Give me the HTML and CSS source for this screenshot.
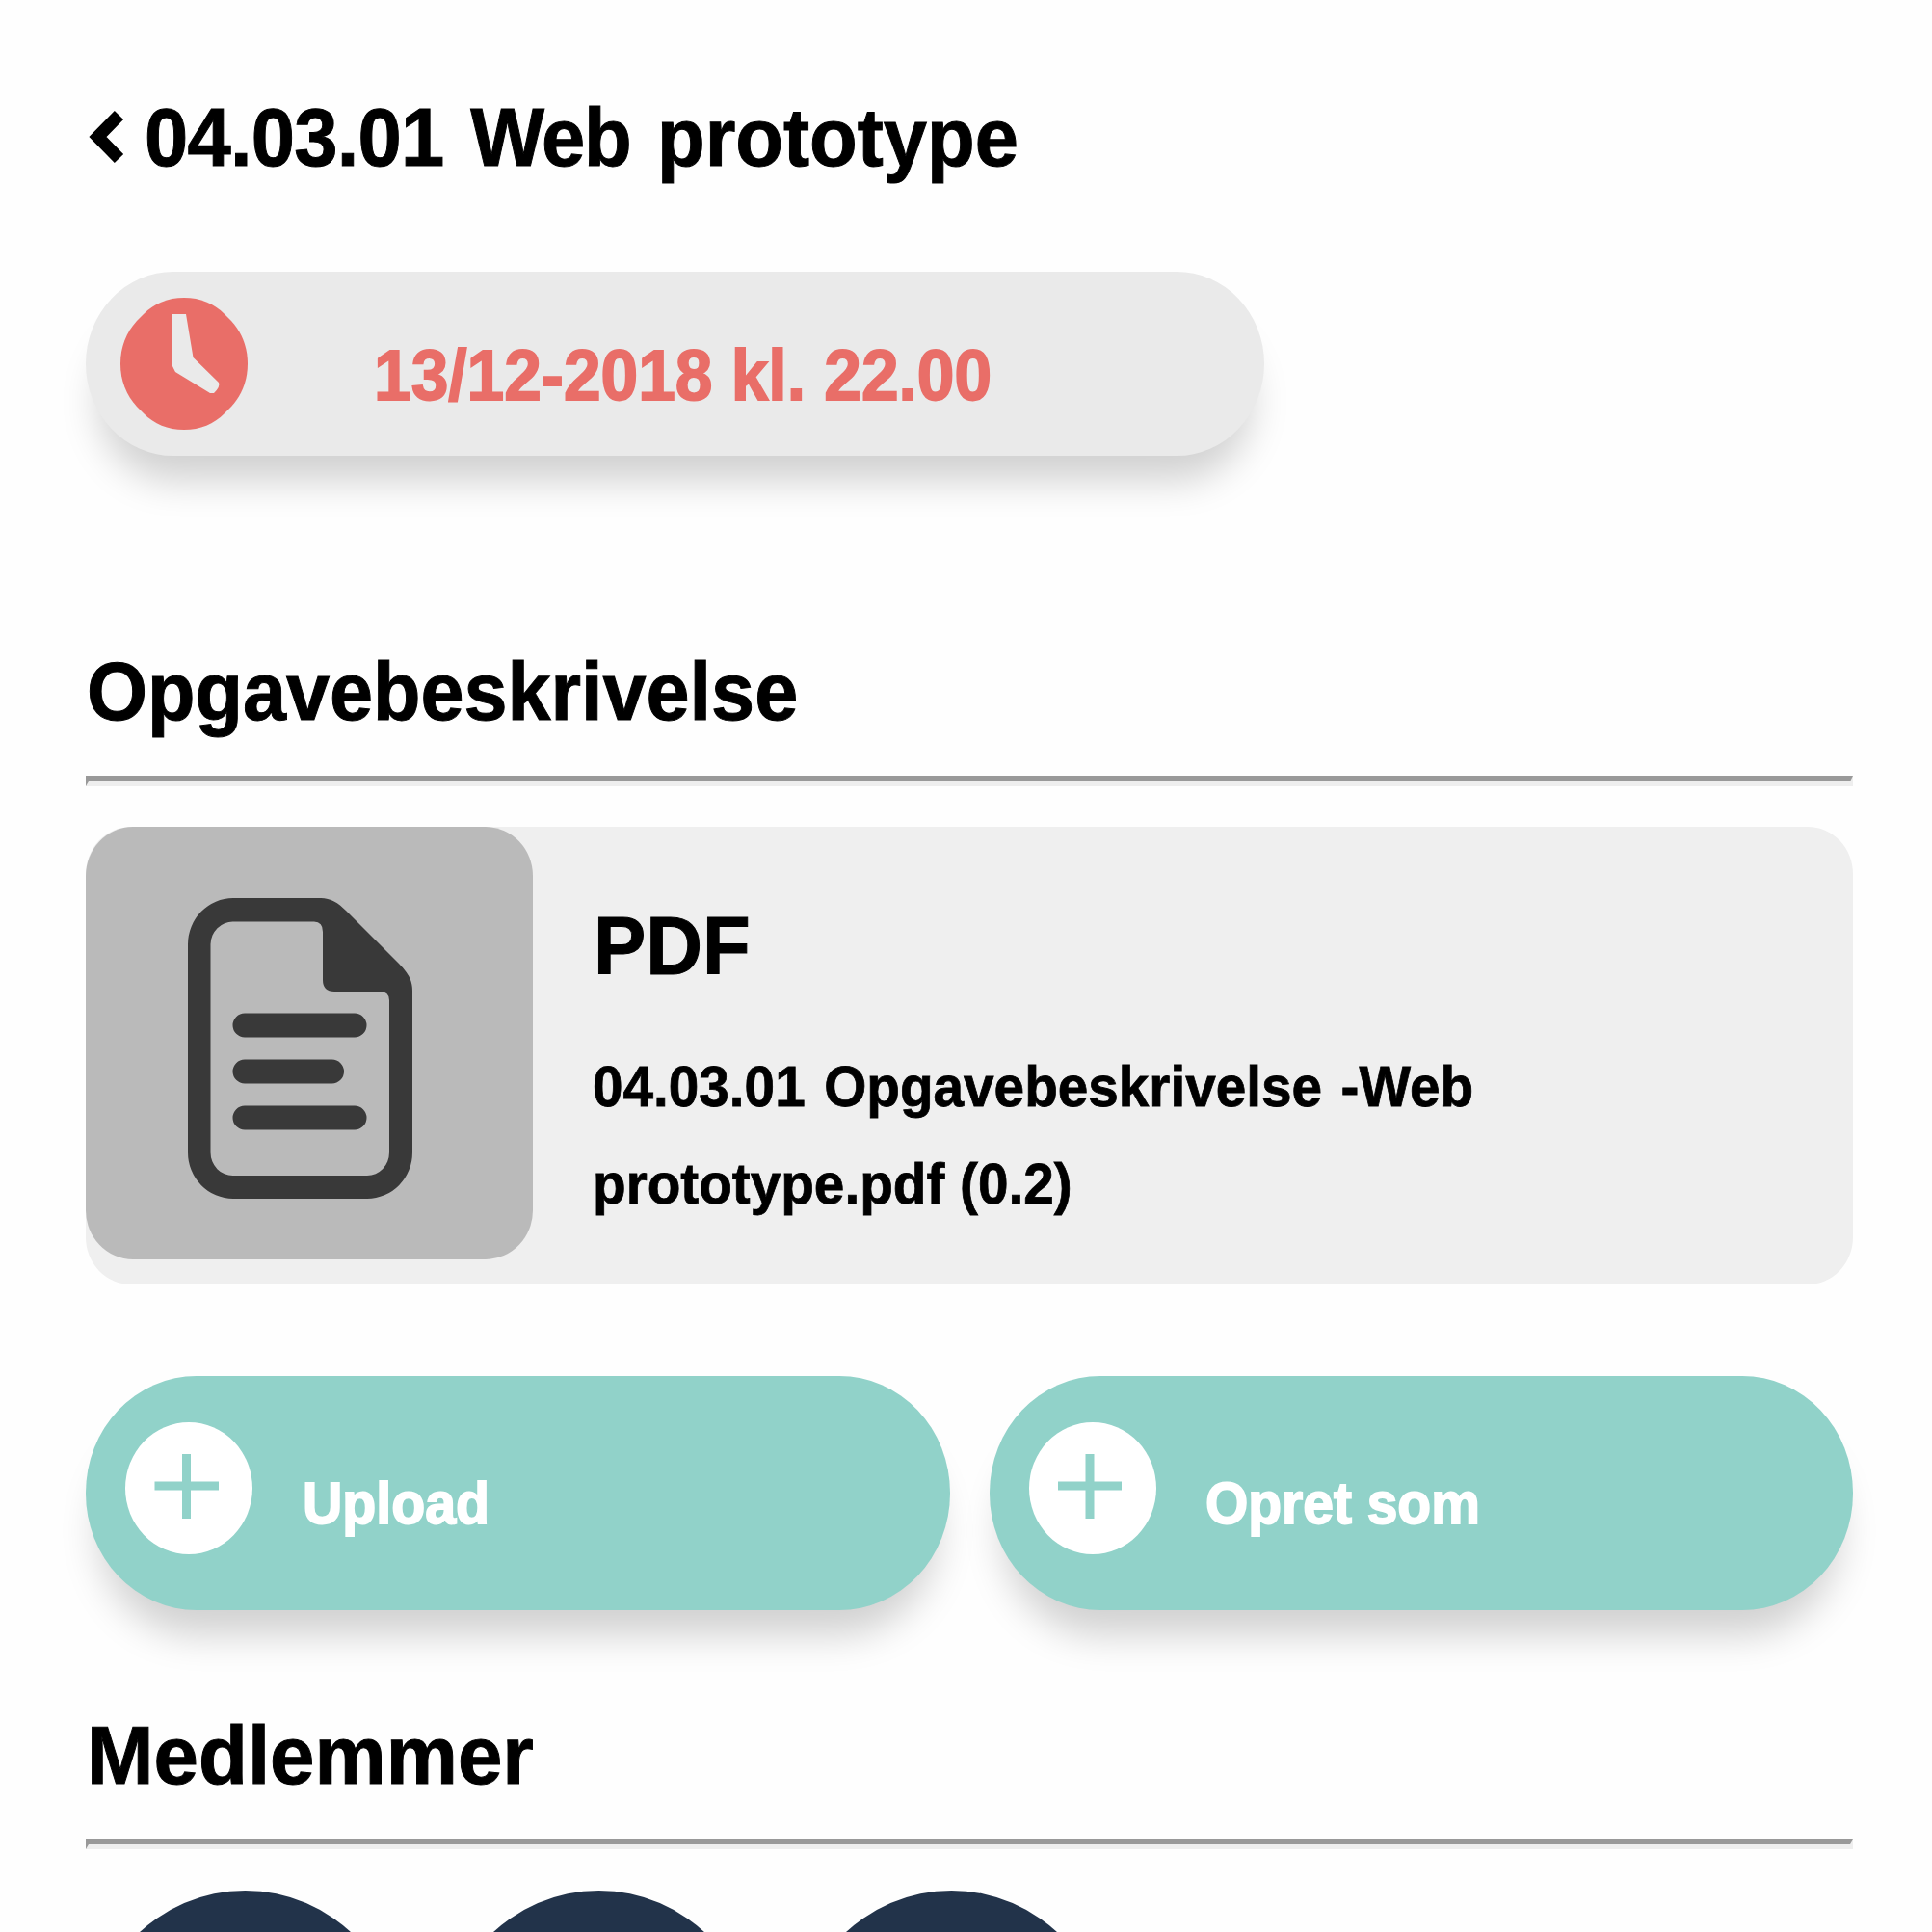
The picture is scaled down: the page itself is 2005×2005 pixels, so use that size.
FILE: index.html
```html
<!DOCTYPE html>
<html lang="da">
<head>
<meta charset="utf-8">
<title>04.03.01 Web prototype</title>
<link rel="stylesheet" href="styles.css">
</head>
<body>
<main class="page">
  <header class="title">
    <svg class="back" viewBox="0 0 38 60"><path d="M31.500 7.500 9.500 30 31.500 52.500" fill="none" stroke="#000" stroke-width="13"/></svg>
    <h1 class="heading"><span class="text text-title"><span class="number">04.03.01</span> <span class="word">Web</span> prototype</span></h1>
  </header>

  <div class="deadline">
    <svg class="clock" viewBox="0 0 132 137"><path d="M66 0C83 0 97 6 108 17L115 24C126 36 132 51 132 68.500C132 86 126 101 115 113L108 120C97 131 83 137 66 137C49 137 35 131 24 120L17 113C6 101 0 86 0 68.500C0 51 6 36 17 24L24 17C35 6 49 0 66 0Z" fill="#e96e68"/><path d="M54 17H68L75.500 62 102 88Q104 92 97 99H93L57 77 54 71Z" fill="#eaeaea"/></svg>
    <span class="text text-date">13/12-2018 kl. 22.00</span>
  </div>

  <section class="section">
    <h2 class="heading"><span class="text text-opgave">Opgavebeskrivelse</span></h2>
    <div class="rule"></div>
    <article class="file">
      <div class="thumb">
        <svg class="doc" viewBox="0 0 233 312"><path fill="#393939" fill-rule="evenodd" d="M47 0H138C148 0 156 5 164 13L219 68C228 77 233 85 233 96V264A47 48 0 0 1 186 312H47A47 48 0 0 1 0 264V48A47 48 0 0 1 47 0ZM47 24.500A23 24 0 0 0 23.500 48V264A23 24 0 0 0 47 288H186A23 24 0 0 0 209 264V106Q209 97 199 97H152Q140 97 140 85V35Q140 24.500 131 24.500Z"/><g stroke="#393939" stroke-width="25" stroke-linecap="round"><path d="M59 132H173M59 180H149.500M59 228H173"/></g></svg>
      </div>
      <div class="info">
        <h3 class="heading"><span class="text text-pdf">PDF</span></h3>
        <p class="name"><span class="text text-name1">04.03.01 Opgavebeskrivelse -Web</span><span class="text text-name2">prototype.pdf (0.2)</span></p>
      </div>
    </article>
    <div class="actions">
      <div class="button">
        <svg class="plus" viewBox="0 0 132 137"><ellipse cx="66" cy="68.500" rx="66" ry="68.500" fill="#fff"/><path d="M30.500 66H97M63.500 33V100" stroke="#91d2c9" stroke-width="9"/></svg>
        <span class="text text-upload">Upload</span>
      </div>
      <div class="button">
        <svg class="plus" viewBox="0 0 132 137"><ellipse cx="66" cy="68.500" rx="66" ry="68.500" fill="#fff"/><path d="M30 66H96M63 33V100" stroke="#91d2c9" stroke-width="9"/></svg>
        <span class="text text-opret">Opret som</span>
      </div>
    </div>
  </section>

  <section class="members">
    <h2 class="heading"><span class="text text-medlem">Medlemmer</span></h2>
    <div class="rule"></div>
    <div class="avatars">
      <div class="avatar"></div>
      <div class="avatar"></div>
      <div class="avatar"></div>
    </div>
  </section>
</main>
</body>
</html>
```
FILE: styles.css
```css
* { box-sizing: border-box; }

body {
  margin: 0;
  background: #fefefe;
  color: #000;
  font-family: "Liberation Sans", Helvetica, Arial, sans-serif;
  font-weight: 700;
}

.page {
  height: 2005px;
  overflow: hidden;
  padding: 91px 82px 0 89px;
}

.heading {
  margin: 0;
  height: 100px;
  padding-left: 1px;
  font-size: 85.5px;
  line-height: 104px;
  -webkit-text-stroke: 1px;
}

.text {
  display: block;
  width: max-content;
  white-space: nowrap;
  transform-origin: 0 0;
}

.title { display: flex; padding-left: 2.500px; }
.back { width: 38px; height: 60px; margin-top: 21px; }
.title .heading { margin-left: 19px; }
.text-title { transform: scaleX(0.951); word-spacing: 5.500px; }
.number { letter-spacing: -0.800px; }
.word { letter-spacing: -1.500px; }

.deadline {
  display: flex;
  width: 1223px;
  height: 191px;
  margin-top: 91px;
  padding: 27px 0 0 36px;
  border-radius: 91px / 95.5px;
  background: #eaeaea;
  box-shadow: 0 39px 39px -13px rgba(0, 0, 0, 0.18);
  color: #e96e68;
}

.clock { width: 132px; height: 137px; }

.text-date {
  margin: 31px 0 0 131px;
  font-size: 73.2px;
  line-height: 100px;
  -webkit-text-stroke: 1.8px;
  transform: scaleX(0.949);
}

.section { margin-top: 193px; }
.text-opgave { transform: scaleX(0.947); }

.rule {
  height: 11px;
  margin-top: 39px;
  border: solid;
  border-width: 6px 3px 5px;
  border-color: #999 #eee #eee #999;
}

.file {
  display: flex;
  height: 475px;
  margin-top: 42px;
  border-radius: 47px / 49px;
  background: #efefef;
}

.thumb {
  width: 464px;
  height: 449px;
  padding: 74px 0 0 105.500px;
  border-radius: 49px / 51px;
  background: #bababa;
}

.doc { display: block; width: 233px; height: 312px; }

.info { padding: 72px 0 0 62px; }
.text-pdf { transform: scaleX(0.952); }

.name {
  margin: 47px 0 0;
  font-size: 59.8px;
  line-height: 101px;
  -webkit-text-stroke: 0.8px;
}

.text-name1 { transform: scaleX(0.948); word-spacing: 4px; }
.text-name2 { transform: scaleX(0.948); }

.actions {
  display: flex;
  gap: 41px;
  margin-top: 95px;
}

.button {
  display: flex;
  flex: 1;
  height: 243px;
  padding: 48px 0 0 41px;
  border-radius: 115px / 121px;
  background: #91d2c9;
  box-shadow: 0 39px 39px -13px rgba(0, 0, 0, 0.18);
  color: #fff;
  font-size: 60.4px;
  line-height: 100px;
}

.plus { width: 132px; height: 137px; }
.button .text { margin: 34px 0 0 52px; -webkit-text-stroke: 1.8px; }
.text-upload { transform: scaleX(0.948); }
.button .text-opret { margin-left: 51px; transform: scaleX(0.943); }

.members { margin-top: 99px; }
.members .rule { height: 10px; border-width: 5px 3px; }
.text-medlem { transform: scaleX(0.976); }

.avatars {
  display: flex;
  gap: 35.500px;
  margin-top: 43px;
}

.avatar {
  width: 331px;
  height: 344px;
  border-radius: 50%;
  background: #22334a;
}
```
